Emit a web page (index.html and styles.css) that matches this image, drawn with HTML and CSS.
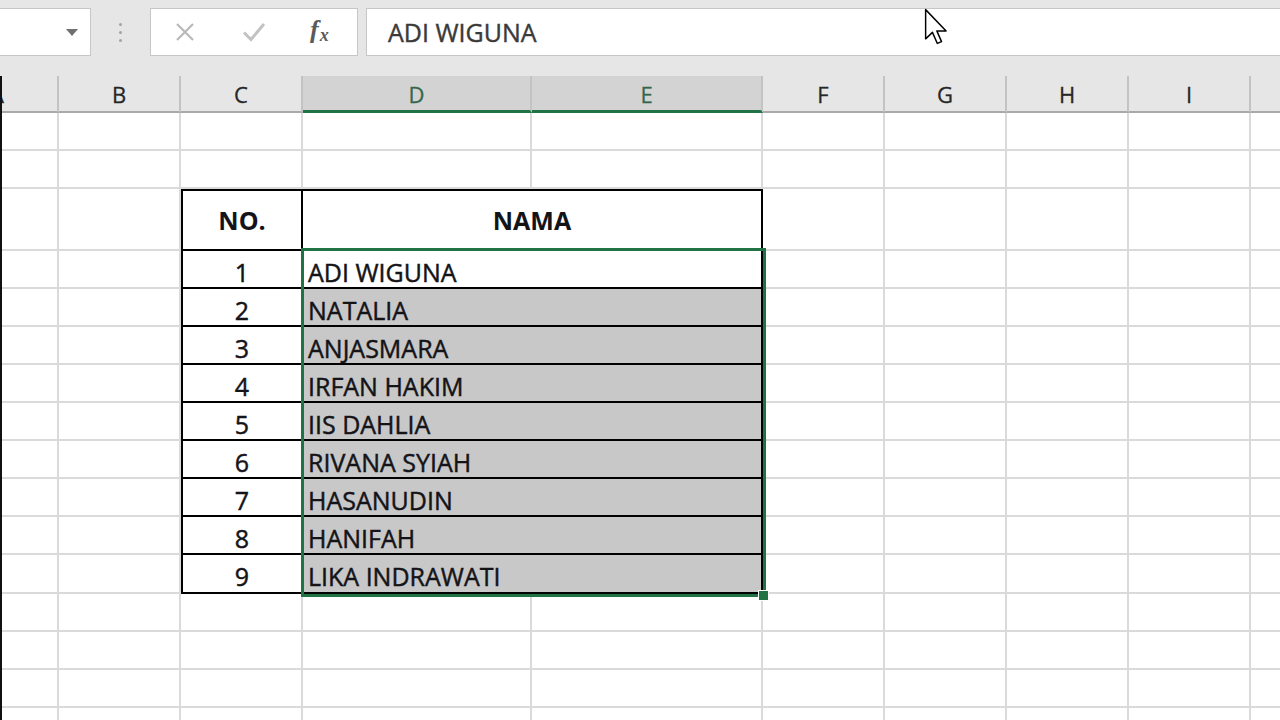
FILE: index.html
```html
<!DOCTYPE html>
<html>
<head>
<meta charset="utf-8">
<title>Excel</title>
<link rel="stylesheet" href="styles.css">
</head>
<body>
<div class="topbar">
  <div class="namebox"><span class="caret"></span></div>
  <div class="grip"><i></i><i></i><i></i></div>
  <div class="fbtns">
    <svg class="ic-x" width="20" height="18" viewBox="0 0 20 18"><path d="M2 1 L18 17 M18 1 L2 17" stroke="#b9b9b9" stroke-width="2.2" fill="none"/></svg>
    <svg class="ic-ok" width="24" height="20" viewBox="0 0 24 20"><path d="M2 10.5 L9 17.5 L22 2" stroke="#c2c2c2" stroke-width="3" fill="none"/></svg>
    <span class="fx">f<span class="x">x</span></span>
  </div>
  <div class="formula">ADI WIGUNA</div>
  <svg class="cursor" width="26" height="39" viewBox="0 0 16 24"><path d="M1 1 L1 19 L5.2 15 L8.2 21.8 L10.8 20.7 L7.9 14.1 L13.6 14.1 Z" fill="#fff" stroke="#000" stroke-width="0.9" stroke-linejoin="round"/></svg>
</div>

<div class="frame">
  <div class="colhead">
    <div>A</div><div>B</div><div>C</div><div class="sel">D</div><div class="sel">E</div><div>F</div><div>G</div><div>H</div><div>I</div><div></div>
  </div>
  <div class="sheet">
    <div class="tbl">
      <div class="th no">NO.</div><div class="th nm">NAMA</div>
      <div class="td no">1</div><div class="td nm">ADI WIGUNA</div>
      <div class="td no">2</div><div class="td nm hl">NATALIA</div>
      <div class="td no">3</div><div class="td nm hl">ANJASMARA</div>
      <div class="td no">4</div><div class="td nm hl">IRFAN HAKIM</div>
      <div class="td no">5</div><div class="td nm hl">IIS DAHLIA</div>
      <div class="td no">6</div><div class="td nm hl">RIVANA SYIAH</div>
      <div class="td no">7</div><div class="td nm hl">HASANUDIN</div>
      <div class="td no">8</div><div class="td nm hl">HANIFAH</div>
      <div class="td no last">9</div><div class="td nm hl last">LIKA INDRAWATI</div>
      <div class="selbox"><span class="handle"></span></div>
    </div>
    <!-- row 1 -->
    <div class="c"></div><div class="c"></div><div class="c"></div><div class="c"></div><div class="c"></div><div class="c"></div><div class="c"></div><div class="c"></div><div class="c"></div><div class="c"></div>
    <!-- row 2 -->
    <div class="c"></div><div class="c"></div><div class="c"></div><div class="c"></div><div class="c"></div><div class="c"></div><div class="c"></div><div class="c"></div><div class="c"></div><div class="c"></div>
    <!-- rows 3-12 (A, B, F-J) -->
    <div class="c"></div><div class="c"></div><div class="c"></div><div class="c"></div><div class="c"></div><div class="c"></div><div class="c"></div>
    <div class="c"></div><div class="c"></div><div class="c"></div><div class="c"></div><div class="c"></div><div class="c"></div><div class="c"></div>
    <div class="c"></div><div class="c"></div><div class="c"></div><div class="c"></div><div class="c"></div><div class="c"></div><div class="c"></div>
    <div class="c"></div><div class="c"></div><div class="c"></div><div class="c"></div><div class="c"></div><div class="c"></div><div class="c"></div>
    <div class="c"></div><div class="c"></div><div class="c"></div><div class="c"></div><div class="c"></div><div class="c"></div><div class="c"></div>
    <div class="c"></div><div class="c"></div><div class="c"></div><div class="c"></div><div class="c"></div><div class="c"></div><div class="c"></div>
    <div class="c"></div><div class="c"></div><div class="c"></div><div class="c"></div><div class="c"></div><div class="c"></div><div class="c"></div>
    <div class="c"></div><div class="c"></div><div class="c"></div><div class="c"></div><div class="c"></div><div class="c"></div><div class="c"></div>
    <div class="c"></div><div class="c"></div><div class="c"></div><div class="c"></div><div class="c"></div><div class="c"></div><div class="c"></div>
    <div class="c"></div><div class="c"></div><div class="c"></div><div class="c"></div><div class="c"></div><div class="c"></div><div class="c"></div>
    <!-- rows 13-16 -->
    <div class="c"></div><div class="c"></div><div class="c"></div><div class="c"></div><div class="c"></div><div class="c"></div><div class="c"></div><div class="c"></div><div class="c"></div><div class="c"></div>
    <div class="c"></div><div class="c"></div><div class="c"></div><div class="c"></div><div class="c"></div><div class="c"></div><div class="c"></div><div class="c"></div><div class="c"></div><div class="c"></div>
    <div class="c"></div><div class="c"></div><div class="c"></div><div class="c"></div><div class="c"></div><div class="c"></div><div class="c"></div><div class="c"></div><div class="c"></div><div class="c"></div>
    <div class="c"></div><div class="c"></div><div class="c"></div><div class="c"></div><div class="c"></div><div class="c"></div><div class="c"></div><div class="c"></div><div class="c"></div><div class="c"></div>
  </div>
</div>
</body>
</html>
```

FILE: styles.css
```css
html, body {
  margin: 0;
  padding: 0;
}
body {
  width: 1280px;
  height: 720px;
  overflow: hidden;
  background: #ffffff;
  font-family: "Open Sans", "Liberation Sans", sans-serif;
  color: #111;
}

/* ---------- formula bar ---------- */
.topbar {
  position: relative;
  height: 76px;
  box-sizing: border-box;
  padding-top: 8px;
  background: #e6e6e6;
  display: flex;
  align-items: flex-start;
}
.namebox {
  width: 91px;
  height: 48px;
  box-sizing: border-box;
  background: #fff;
  border: 1px solid #c6c6c6;
  border-left: none;
  display: flex;
  align-items: center;
  justify-content: flex-end;
  padding-right: 12px;
}
.caret {
  width: 0;
  height: 0;
  border-left: 6px solid transparent;
  border-right: 6px solid transparent;
  border-top: 7px solid #707070;
}
.grip {
  width: 59px;
  height: 48px;
  display: flex;
  flex-direction: column;
  align-items: center;
  justify-content: center;
  gap: 5px;
}
.grip i {
  display: block;
  width: 3px;
  height: 3px;
  border-radius: 50%;
  background: #a3a3a3;
}
.fbtns {
  width: 208px;
  height: 48px;
  box-sizing: border-box;
  background: #fff;
  border: 1px solid #c6c6c6;
  display: flex;
  align-items: center;
  padding-left: 24px;
}
.ic-ok { margin-left: 47px; }
.fx {
  margin-left: 44px;
  font-family: "Liberation Serif", serif;
  font-style: italic;
  font-weight: 700;
  font-size: 26px;
  color: #5a5a5a;
  line-height: 1;
  margin-top: -4px;
}
.fx .x {
  font-size: 18px;
  position: relative;
  top: 3px;
  margin-left: 1px;
}
.formula {
  flex: 1;
  margin-left: 8px;
  margin-right: -10px;
  height: 48px;
  box-sizing: border-box;
  background: #fff;
  border: 1px solid #c6c6c6;
  padding-left: 21px;
  display: flex;
  align-items: center;
  font-size: 25px;
  color: #3a3a3a;
  -webkit-text-stroke: 0.4px #3a3a3a;
}
.cursor {
  position: absolute;
  left: 924px;
  top: 8px;
}

/* ---------- sheet ---------- */
.frame {
  border-left: 2px solid #111;
  overflow: hidden;
  height: 644px;
}
.colhead,
.sheet {
  margin-left: -65px;
  width: 1436px;
  display: grid;
  grid-template-columns: 122px 122px 122px 229px 231px 122px 122px 122px 122px 122px;
}
.colhead {
  height: 37px;
}
.colhead div {
  box-sizing: border-box;
  background: #e6e6e6;
  border-right: 2px solid #c3c3c3;
  border-bottom: 2px solid #a9a9a9;
  display: flex;
  align-items: center;
  justify-content: center;
  font-size: 22px;
  color: #262626;
  -webkit-text-stroke: 0.3px #262626;
  padding-top: 1px;
}
.colhead .sel {
  background: #d3d3d3;
  border-bottom: 3px solid #217346;
  color: #33684c;
  -webkit-text-stroke: 0.3px #33684c;
}

.sheet {
  grid-template-rows: 38px 38px 62px repeat(8, 38px) 39px repeat(4, 38px);
}
.c {
  box-sizing: border-box;
  border-right: 2px solid #dadada;
  border-bottom: 2px solid #dadada;
}

/* ---------- data table ---------- */
.tbl {
  grid-column: 3 / 6;
  grid-row: 3 / 13;
  position: relative;
  box-sizing: border-box;
  border: 2px solid #000;
  background: #fff;
  display: grid;
  grid-template-columns: 120px 1fr;
  grid-template-rows: 60px repeat(8, 38px) 37px;
}
.th, .td {
  box-sizing: border-box;
  border-bottom: 2px solid #000;
  display: flex;
  align-items: center;
  font-size: 25px;
  color: #141418;
}
.th {
  font-weight: 700;
  justify-content: center;
}
.td {
  padding-top: 5px;
  -webkit-text-stroke: 0.45px #141418;
}
.td.last { border-bottom: none; }
.no {
  border-right: 2px solid #000;
  justify-content: center;
}
.td.nm {
  padding-left: 5px;
}
.hl {
  background: #c8c8c8;
}
.selbox {
  position: absolute;
  left: 118px;
  top: 57px;
  width: 465px;
  height: 349px;
  box-sizing: border-box;
  border: 3px solid #217346;
}
.handle {
  position: absolute;
  right: -6px;
  bottom: -7px;
  width: 11px;
  height: 11px;
  box-sizing: border-box;
  background: #217346;
  border: 1px solid #fff;
}
```
